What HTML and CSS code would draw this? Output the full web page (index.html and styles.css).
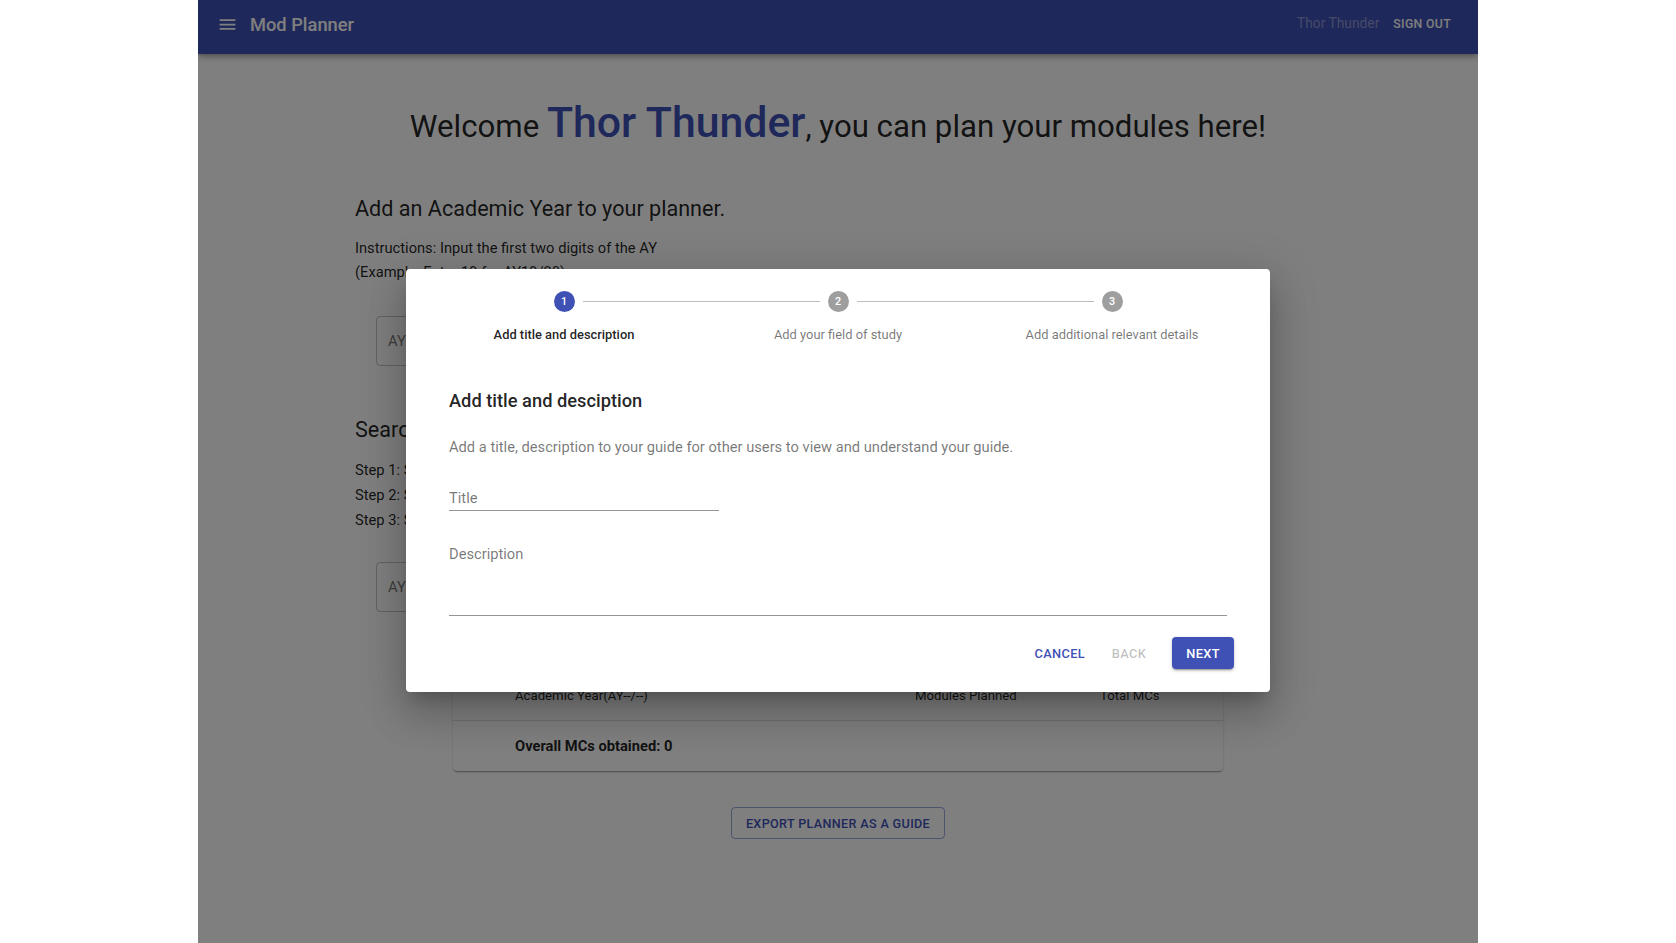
FILE: index.html
```html
<!DOCTYPE html>
<html lang="en">
<head>
<meta charset="utf-8">
<title>Mod Planner</title>
<link rel="stylesheet" href="styles.css">
</head>
<body>
<div class="app">
  <header class="appbar">
    <div class="appbar-left">
      <svg class="menu-icon" viewBox="0 0 24 24" aria-hidden="true"><path d="M3 18h18v-2H3v2zm0-5h18v-2H3v2zm0-7v2h18V6H3z"/></svg>
      <span class="brand">Mod Planner</span>
    </div>
    <div class="appbar-right">
      <span class="user">Thor Thunder</span>
      <span class="signout">SIGN OUT</span>
    </div>
  </header>

  <main class="content">
    <h1 class="welcome">Welcome <span class="name">Thor Thunder</span>, you can plan your modules here!</h1>

    <section class="section">
      <h2 class="section-title">Add an Academic Year to your planner.</h2>
      <p class="line">Instructions: Input the first two digits of the AY</p>
      <p class="line">(Example: Enter 19 for AY19/20)</p>
      <div class="outlined">AY</div>
    </section>

    <section class="section second">
      <h2 class="section-title">Search for modules to add to your planner.</h2>
      <p class="line step-line">Step 1: Select the academic year</p>
      <p class="line step-line">Step 2: Select the semester</p>
      <p class="line step-line">Step 3: Search for the module code</p>
      <div class="outlined">AY</div>
    </section>

    <div class="card">
      <div class="row head">
        <span></span>
        <span>Academic Year(AY--/--)</span>
        <span>Modules Planned</span>
        <span>Total MCs</span>
      </div>
      <div class="row total">
        <span></span>
        <span>Overall MCs obtained: 0</span>
      </div>
    </div>

    <div class="export-wrap">
      <button class="export">EXPORT PLANNER AS A GUIDE</button>
    </div>
  </main>

  <div class="backdrop"></div>

  <div class="dialog">
    <div class="stepper">
      <div class="step active">
        <div class="circle">1</div>
        <div class="step-label">Add title and description</div>
      </div>
      <div class="step">
        <div class="connector"></div>
        <div class="circle">2</div>
        <div class="step-label">Add your field of study</div>
      </div>
      <div class="step">
        <div class="connector"></div>
        <div class="circle">3</div>
        <div class="step-label">Add additional relevant details</div>
      </div>
    </div>
    <div class="dialog-body">
      <h3 class="dialog-title">Add title and desciption</h3>
      <p class="dialog-text">Add a title, description to your guide for other users to view and understand your guide.</p>
      <div class="field title-field"><span class="field-label">Title</span></div>
      <div class="field desc-field"><span class="field-label">Description</span></div>
    </div>
    <div class="actions">
      <button class="btn text primary">CANCEL</button>
      <button class="btn text disabled">BACK</button>
      <button class="btn contained">NEXT</button>
    </div>
  </div>
</div>
</body>
</html>
```

FILE: styles.css
```css
* { box-sizing: border-box; }

html, body {
  margin: 0;
  padding: 0;
  background: #ffffff;
  font-family: Roboto, "Liberation Sans", Arial, sans-serif;
  color: rgba(0, 0, 0, 0.87);
}

.app {
  position: relative;
  width: 1280px;
  min-height: 100vh;
  margin: 0 auto;
  background: #ffffff;
  overflow: hidden;
}

/* App bar */
.appbar {
  height: 54px;
  background: #3f51b5;
  color: #ffffff;
  display: flex;
  align-items: center;
  justify-content: space-between;
  padding: 0 27px 6px 19px;
  box-shadow: 0 2px 4px -1px rgba(0,0,0,.2), 0 4px 5px 0 rgba(0,0,0,.14), 0 1px 10px 0 rgba(0,0,0,.12);
}

.appbar-left {
  display: flex;
  align-items: center;
  gap: 12px;
}

.menu-icon {
  width: 21px;
  height: 21px;
  fill: #ffffff;
}

.brand {
  font-size: 18.3px;
  font-weight: 500;
}

.appbar-right {
  display: flex;
  align-items: center;
  gap: 14px;
}

.user {
  font-size: 13.8px;
  color: rgba(255, 255, 255, 0.4);
  margin-top: -2px;
}

.signout {
  font-size: 12.25px;
  font-weight: 500;
  letter-spacing: 0.35px;
}

/* Content */
.content {
  width: 966px;
  margin: 0 auto;
}

.welcome {
  margin: 43px 0 0;
  text-align: center;
  font-size: 31.2px;
  font-weight: 400;
  line-height: 50px;
}

.welcome .name {
  font-size: 42.8px;
  font-weight: 500;
  color: #3f51b5;
}

.section-title {
  margin: 41px 0 11px;
  font-size: 21.6px;
  font-weight: 400;
  line-height: 32px;
}

.line {
  margin: 0;
  font-size: 14.7px;
  line-height: 24px;
}

.line.step-line {
  line-height: 25px;
}

.outlined {
  margin: 32px 0 0 21px;
  width: 320px;
  height: 50px;
  border: 1px solid rgba(0, 0, 0, 0.23);
  border-radius: 4px;
  display: flex;
  align-items: center;
  padding-left: 11px;
  font-size: 14.7px;
  color: rgba(0, 0, 0, 0.54);
}

.section.second .section-title {
  margin-top: 48px;
  margin-bottom: 12px;
}

.section.second .outlined {
  margin-top: 29px;
}

/* Table card */
.card {
  width: 770px;
  margin: 59px auto 0;
  background: #ffffff;
  border-radius: 4px;
  box-shadow: 0 2px 1px -1px rgba(0,0,0,.2), 0 1px 1px 0 rgba(0,0,0,.14), 0 1px 3px 0 rgba(0,0,0,.12);
}

.row {
  display: grid;
  grid-template-columns: 62px 400px 185px 1fr;
  align-items: center;
  height: 50px;
  font-size: 13.2px;
}

.row.head {
  border-bottom: 1px solid rgba(224, 224, 224, 1);
}

.row.total {
  font-weight: 700;
  font-size: 14.7px;
}

.export-wrap {
  display: flex;
  justify-content: center;
  margin-top: 36px;
}

.export {
  height: 32px;
  padding: 0 14px;
  background: transparent;
  border: 1px solid rgba(63, 81, 181, 0.5);
  border-radius: 4px;
  color: #3f51b5;
  font-family: inherit;
  font-size: 12.6px;
  font-weight: 500;
  letter-spacing: 0.35px;
}

/* Backdrop + dialog */
.backdrop {
  position: absolute;
  inset: 0;
  background: rgba(0, 0, 0, 0.5);
}

.dialog {
  position: absolute;
  left: 208px;
  top: 269px;
  width: 864px;
  background: #ffffff;
  border-radius: 4px;
  box-shadow: 0 11px 15px -7px rgba(0,0,0,.2), 0 24px 38px 3px rgba(0,0,0,.14), 0 9px 46px 8px rgba(0,0,0,.12);
}

.stepper {
  display: flex;
  padding: 22px 21px 19px;
}

.step {
  position: relative;
  flex: 1;
  display: flex;
  flex-direction: column;
  align-items: center;
}

.connector {
  position: absolute;
  top: 10px;
  left: calc(-50% + 18.5px);
  right: calc(50% + 18.5px);
  border-top: 1px solid #bdbdbd;
}

.circle {
  width: 21px;
  height: 21px;
  border-radius: 50%;
  background: rgba(0, 0, 0, 0.38);
  color: #ffffff;
  font-size: 10.8px;
  font-weight: 500;
  display: flex;
  align-items: center;
  justify-content: center;
}

.step.active .circle {
  background: #3f51b5;
}

.step-label {
  margin-top: 16px;
  font-size: 12.9px;
  line-height: 14px;
  color: rgba(0, 0, 0, 0.54);
}

.step.active .step-label {
  color: rgba(0, 0, 0, 0.87);
  font-weight: 500;
}

.dialog-body {
  padding: 0 43px;
}

.dialog-title {
  margin: 28px 0 0;
  font-size: 18.3px;
  font-weight: 500;
  line-height: 24px;
}

.dialog-text {
  margin: 24px 0 0;
  font-size: 14.7px;
  line-height: 20px;
  color: rgba(0, 0, 0, 0.54);
}

.field {
  border-bottom: 1px solid rgba(0, 0, 0, 0.42);
  font-size: 14.7px;
  line-height: 20px;
  color: rgba(0, 0, 0, 0.54);
}

.title-field {
  width: 270px;
  margin-top: 31px;
  padding-bottom: 2px;
}

.desc-field {
  margin-top: 33px;
  height: 72px;
}

.actions {
  display: flex;
  justify-content: flex-end;
  align-items: center;
  padding: 21px 36px 23px 0;
}

.btn {
  height: 32px;
  border: none;
  background: transparent;
  font-family: inherit;
  font-size: 12.8px;
  font-weight: 500;
  letter-spacing: 0.35px;
  border-radius: 4px;
  padding: 0 8px;
  min-width: 56px;
}

.btn.primary { color: #3f51b5; }
.btn.disabled { color: rgba(0, 0, 0, 0.26); margin-left: 8px; }

.btn.contained {
  margin-left: 15px;
  width: 62px;
  background: #3f51b5;
  color: #ffffff;
  box-shadow: 0 3px 1px -2px rgba(0,0,0,.2), 0 2px 2px 0 rgba(0,0,0,.14), 0 1px 5px 0 rgba(0,0,0,.12);
}
```
